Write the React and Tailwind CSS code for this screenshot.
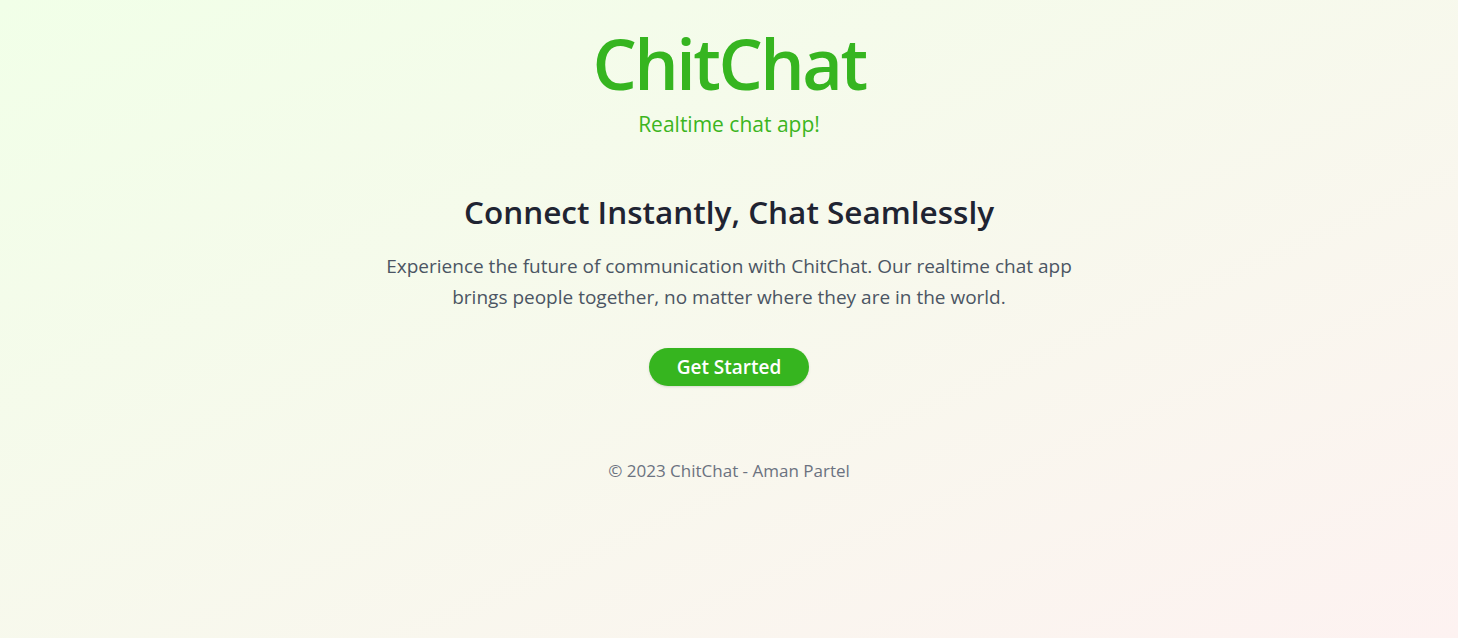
export default function App() {
  return (
    <div
      className="min-h-screen w-full bg-gradient-to-br from-[#f1ffe8] to-[#fdf2f1] flex flex-col items-center text-center"
      style={{ fontFamily: '"Open Sans", "Noto Sans", sans-serif' }}
    >
      <header className="pt-[27px] flex flex-col items-center">
        <h1 className="text-[70px] leading-[72px] font-semibold text-[#36b520] tracking-[-2.5px]">
          ChitChat
        </h1>
        <p className="mt-[11px] text-[21px] leading-[28px] text-[#3bb521]">Realtime chat app!</p>
      </header>

      <main className="mt-[54px] flex flex-col items-center">
        <h2 className="text-[31.5px] leading-[40px] font-semibold text-[#1f2432]">
          Connect Instantly, Chat Seamlessly
        </h2>
        <p className="mt-[19px] w-[700px] text-[19px] leading-[31px] text-[#4b5563]">
          Experience the future of communication with ChitChat. Our realtime chat app brings
          people together, no matter where they are in the world.
        </p>
        <button className="mt-[35px] h-[38px] w-[160px] rounded-full bg-[#36b51f] text-white text-[19px] font-semibold shadow-sm">
          Get Started
        </button>
      </main>

      <footer className="mt-[72px] text-[17px] text-[#6b7280]">
        © 2023 ChitChat - Aman Partel
      </footer>
    </div>
  );
}
